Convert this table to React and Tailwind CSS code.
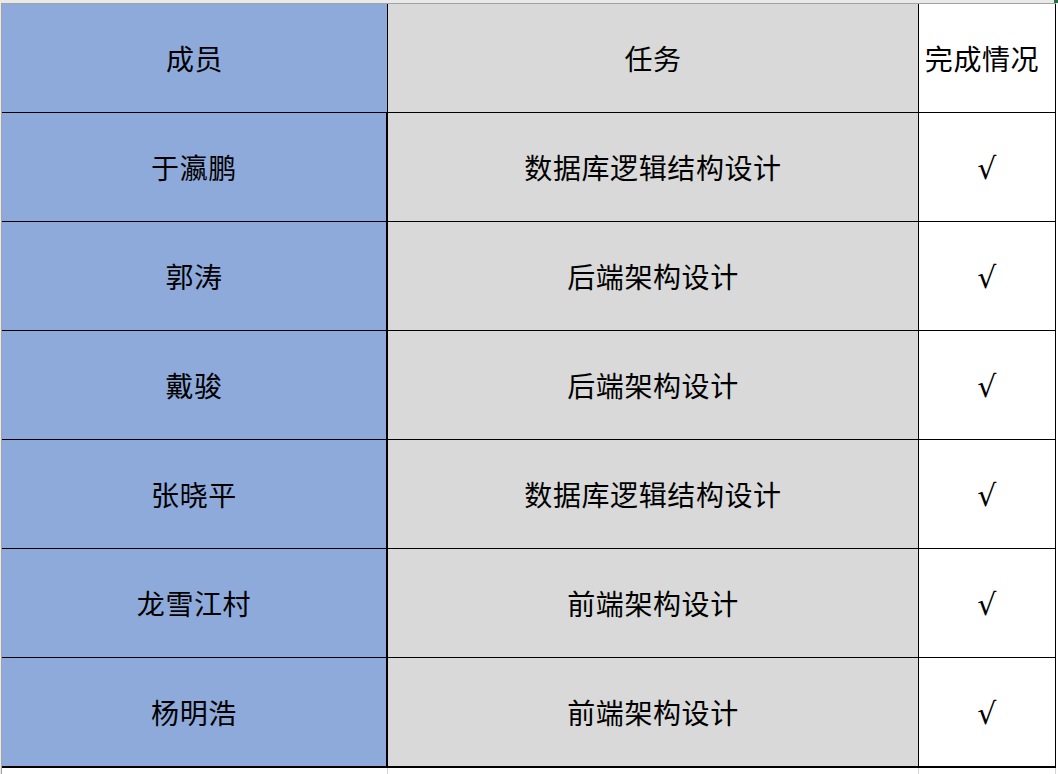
const rows = [
  { name: '于瀛鹏', task: '数据库逻辑结构设计' },
  { name: '郭涛', task: '后端架构设计' },
  { name: '戴骏', task: '后端架构设计' },
  { name: '张晓平', task: '数据库逻辑结构设计' },
  { name: '龙雪江村', task: '前端架构设计' },
  { name: '杨明浩', task: '前端架构设计' },
]

const font = { fontFamily: '"Noto Sans CJK SC", "Noto Sans", sans-serif' }

export default function App() {
  return (
    <div className="w-[1058px] h-[774px] bg-white overflow-hidden text-black" style={font}>
      {/* top gridline strip */}
      <div className="h-[3px] flex bg-[#e9e9e9]">
        <div className="flex-1" />
        <div className="w-[4px] bg-[#217346]" />
      </div>
      <div className="flex">
        <div className="w-[1px] bg-[#e9e9e9]" />
        <div className="border-l border-t border-[#a3a3a3]">
          {/* header */}
          <div className="flex h-[109px] border-b border-black text-[28px] tracking-[0.6px]">
            <div className="w-[386px] bg-[#8eaadb] border-r border-black flex items-center justify-center">成员</div>
            <div className="w-[531px] bg-[#d9d9d9] border-r border-black flex items-center justify-center">任务</div>
            <div className="w-[137px] bg-white border-r border-black flex items-center justify-center pr-[10px] whitespace-nowrap">完成情况</div>
          </div>
          {rows.map((r, i) => (
            <div
              key={i}
              className={
                i === rows.length - 1
                  ? 'flex h-[110px] border-b-2 border-black text-[28px] tracking-[0.6px]'
                  : 'flex h-[109px] border-b border-black text-[28px] tracking-[0.6px]'
              }
            >
              <div className="w-[386px] bg-[#8eaadb] border-r-2 border-black flex items-center justify-center">{r.name}</div>
              <div className="w-[531px] bg-[#d9d9d9] border-r border-black flex items-center justify-center">{r.task}</div>
              <div className="w-[137px] bg-white border-r border-black flex items-center justify-center text-[30px] pt-[2px]" style={{ fontFamily: '"DejaVu Sans", sans-serif' }}>√</div>
            </div>
          ))}
          {/* empty sheet below */}
          <div className="flex h-[8px]">
            <div className="w-[386px] border-r border-[#d4d4d4]" />
            <div className="w-[531px] border-r border-[#d4d4d4]" />
            <div className="w-[137px] border-r border-[#d4d4d4]" />
          </div>
        </div>
      </div>
    </div>
  )
}
